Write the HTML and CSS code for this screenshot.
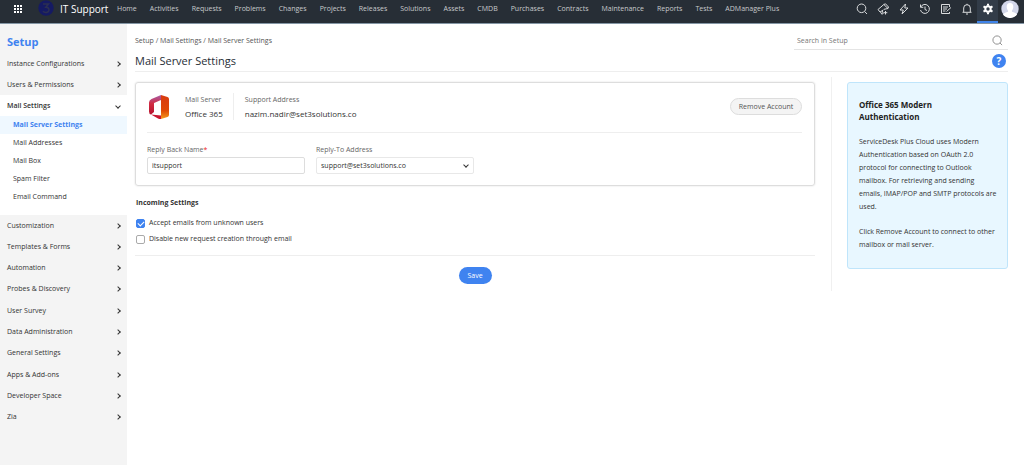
FILE: index.html
```html
<!DOCTYPE html>
<html lang="en">
<head>
<meta charset="utf-8">
<title>Mail Server Settings</title>
<link rel="stylesheet" href="styles.css">
</head>
<body>
<header class="topbar">
  <button class="icon-btn apps" aria-label="Apps">
    <svg width="10" height="10" viewBox="0 0 10 10" fill="#fff"><path d="M1 1h2v2H1zM4 1h2v2H4zM7 1h2v2H7zM1 4h2v2H1zM4 4h2v2H4zM7 4h2v2H7zM1 7h2v2H1zM4 7h2v2H4zM7 7h2v2H7z"/></svg>
  </button>
  <svg class="logo" width="16" height="16" viewBox="0 0 16 16"><circle cx="8" cy="8" r="7.700" fill="#151a63"/><path d="M5 4h5.500L7.800 7.200C10 7.200 11 8.300 11 9.800c0 3-4.500 3.600-6 1.300" fill="none" stroke="#2b2f52" stroke-width="1.500"/></svg>
  <span class="brand">IT Support</span>
  <nav class="nav">
    <a href="#">Home</a><a href="#">Activities</a><a href="#">Requests</a><a href="#">Problems</a><a href="#">Changes</a><a href="#">Projects</a><a href="#">Releases</a><a href="#">Solutions</a><a href="#">Assets</a><a href="#">CMDB</a><a href="#">Purchases</a><a href="#">Contracts</a><a href="#">Maintenance</a><a href="#">Reports</a><a href="#">Tests</a><a href="#">ADManager Plus</a>
  </nav>
  <div class="tools">
    <button class="icon-btn" aria-label="Search"><svg width="12" height="12" viewBox="0 0 12 12"><circle cx="5.500" cy="5.300" r="4.300"/><path d="M8.600 8.500 11 11"/></svg></button>
    <button class="icon-btn" aria-label="Announcements"><svg width="12" height="12" viewBox="0 0 12 12"><path d="M1 6.500 6.800 1.500 11 5.500 7 6.300M6.800 1.500 8.500.8 11.500 4 11 5.500M1 6.500 3 9l3.500-2.200M3.500 9l1.300 2.200 1.500-.8L5.200 8M8.500 8v3.500M6.800 9.700h3.500"/></svg></button>
    <button class="icon-btn" aria-label="Quick actions"><svg width="12" height="12" viewBox="0 0 12 12"><path d="M7.500 1 2 7h3.300L4 11l6-6H6.800z"/></svg></button>
    <button class="icon-btn" aria-label="History"><svg width="12" height="12" viewBox="0 0 12 12"><path d="M1.800 4A4.500 4.500 0 1 1 1.500 7M1.500 1.500V4.300h2.800M6 3.500v3L8 7.500"/></svg></button>
    <button class="icon-btn" aria-label="Notes"><svg width="12" height="12" viewBox="0 0 12 12"><path d="M9.500 4V1.500h-8v9h8V9M3 4h5M3 6h4M3 8h2.500M6.500 8.500 11 4.500"/></svg></button>
    <button class="icon-btn" aria-label="Notifications"><svg width="12" height="12" viewBox="0 0 12 12"><path d="M1.500 9.300h9M2.700 9V5a3.300 3.300 0 0 1 6.600 0v4M6 1.700V.8M5 11h2"/></svg></button>
    <button class="icon-btn active" aria-label="Setup"><svg width="12" height="12" viewBox="0 0 12 12"><g class="gear"><circle cx="6" cy="6" r="2.700"/><path d="M6 .8v2M6 9.200v2M1.500 3.400l1.700 1M8.800 7.600l1.700 1M1.500 8.600l1.700-1M8.800 4.400l1.700-1"/></g></svg></button>
    <button class="icon-btn avatar" aria-label="Profile"><svg width="18" height="18" viewBox="0 0 18 18"><circle cx="9" cy="9" r="8.700" fill="#d3d7ea"/><path d="M9 3c4 0 4 5 2 7.500v1.200c2 .6 4 1.300 5 2.800a8.700 8.700 0 0 1-14 0c1-1.500 3-2.200 5-2.800v-1.200C5 8 5 3 9 3z" fill="#fff"/></svg></button>
  </div>
</header>

<div class="layout">
  <aside class="sidebar">
    <h2 class="side-title">Setup</h2>
    <ul class="menu">
      <li><a href="#">Instance Configurations<i class="chev"></i></a></li>
      <li><a href="#">Users &amp; Permissions<i class="chev"></i></a></li>
    </ul>
    <section class="open">
      <a class="open-head" href="#">Mail Settings<i class="chev down"></i></a>
      <ul class="submenu">
        <li><a class="current" href="#">Mail Server Settings</a></li>
        <li><a href="#">Mail Addresses</a></li>
        <li><a href="#">Mail Box</a></li>
        <li><a href="#">Spam Filter</a></li>
        <li><a href="#">Email Command</a></li>
      </ul>
    </section>
    <ul class="menu long">
      <li><a href="#">Customization<i class="chev"></i></a></li>
      <li><a href="#">Templates &amp; Forms<i class="chev"></i></a></li>
      <li><a href="#">Automation<i class="chev"></i></a></li>
      <li><a href="#">Probes &amp; Discovery<i class="chev"></i></a></li>
      <li><a href="#">User Survey<i class="chev"></i></a></li>
      <li><a href="#">Data Administration<i class="chev"></i></a></li>
      <li><a href="#">General Settings<i class="chev"></i></a></li>
      <li><a href="#">Apps &amp; Add-ons<i class="chev"></i></a></li>
      <li><a href="#">Developer Space<i class="chev"></i></a></li>
      <li><a href="#">Zia<i class="chev"></i></a></li>
    </ul>
  </aside>

  <main class="main">
    <div class="crumb-row">
      <p class="crumbs">Setup / Mail Settings / Mail Server Settings</p>
      <label class="search"><input type="text" placeholder="Search in Setup" aria-label="Search in Setup"><svg width="11" height="11" viewBox="0 0 12 12" fill="none" stroke="#888"><circle cx="5.500" cy="5.500" r="4.500"/><path d="M8.700 8.700 11 11"/></svg></label>
    </div>
    <div class="title-row">
      <h1>Mail Server Settings</h1>
      <button class="help" aria-label="Help">?</button>
    </div>
    <div class="columns">
      <form class="form">
        <div class="card">
          <div class="account">
            <svg class="office" width="22" height="26" viewBox="0 0 22 26">
              <defs>
                <linearGradient id="l" x1="0" y1="0" x2="0" y2="1"><stop offset="0" stop-color="#a75fa8"/><stop offset=".45" stop-color="#d22b42"/><stop offset="1" stop-color="#b5122c"/></linearGradient>
                <linearGradient id="r" x1="0" y1="0" x2="0" y2="1"><stop offset="0" stop-color="#d83b12"/><stop offset=".65" stop-color="#e04a05"/><stop offset="1" stop-color="#f59a1a"/></linearGradient>
              </defs>
              <path d="M13 1 3.500 5Q1 6 1 8.500v9Q1 20 3 20.500l3-2.500V9l7-3z" fill="url(#l)"/>
              <path d="M13 1l6.500 2Q21 3.500 21 5v16q0 1.500-1.500 2L13 25z" fill="url(#r)"/>
              <path d="M3 20.500 13 21.500V25Q11.500 25.300 10 24.500z" fill="#c8152f"/>
            </svg>
            <dl class="fact"><dt>Mail Server</dt><dd>Office 365</dd></dl>
            <dl class="fact address"><dt>Support Address</dt><dd>nazim.nadir@set3solutions.co</dd></dl>
            <button type="button" class="remove">Remove Account</button>
          </div>
          <div class="fields">
            <div class="field"><label for="name">Reply Back Name<span class="req">*</span></label><input id="name" type="text" value="itsupport"></div>
            <div class="field"><label for="reply">Reply-To Address</label><div class="select"><select id="reply"><option>support@set3solutions.co</option></select><i class="chev down"></i></div></div>
          </div>
        </div>
        <h3>Incoming Settings</h3>
        <label class="check"><input type="checkbox" checked>Accept emails from unknown users</label>
        <label class="check"><input type="checkbox">Disable new request creation through email</label>
        <div class="actions"><button type="button" class="save">Save</button></div>
      </form>
      <aside class="help-col">
        <div class="info">
          <h4>Office 365 Modern Authentication</h4>
          <p>ServiceDesk Plus Cloud uses Modern Authentication based on OAuth 2.0 protocol for connecting to Outlook mailbox. For retrieving and sending emails, IMAP/POP and SMTP protocols are used.</p>
          <p>Click Remove Account to connect to other mailbox or mail server.</p>
        </div>
      </aside>
    </div>
  </main>
</div>
</body>
</html>
```
FILE: styles.css
```css
* { box-sizing: border-box; }
body, h1, h2, h3, h4, p, ul, dl, dd { margin: 0; padding: 0; }
body {
  display: flex; flex-direction: column; min-height: 100vh;
  font: 7px/12px "Open Sans", "Noto Sans", sans-serif; color: #333; background: #fff;
}
a { color: inherit; text-decoration: none; }
ul { list-style: none; }
button, input, select { font: inherit; color: inherit; margin: 0; }
button { padding: 0; border: 0; background: none; }

.topbar { display: flex; height: 24px; background: #272e36; border-bottom: 1px solid #8496a5; color: #fff; }
.icon-btn { display: flex; align-items: center; justify-content: center; width: 21px; height: 18px; }
.apps { margin-left: 7px; }
.logo { margin: 0 6px 0 10px; }
.brand { width: 57px; font-size: 10px; line-height: 18px; white-space: nowrap; }
.nav { display: flex; gap: 13px; line-height: 17px; color: #c8cacc; white-space: nowrap; }
.tools { display: flex; margin-left: auto; padding-right: 3px; }
.tools svg { fill: none; stroke: #dadcde; }
.tools .active { height: 23px; padding-bottom: 3px; background: #323c48; border-bottom: 2px solid #3f83e8; }
.gear { stroke: #fff; stroke-width: 2; }
.tools .avatar { width: 23px; }
.avatar svg { stroke: none; }

.layout { display: flex; flex: 1; }
.sidebar { width: 127px; flex: none; background: #f4f4f4; }
.side-title { padding: 8px 7px 2px; font-size: 11px; line-height: 19px; color: #3f83f0; }
.menu a, .open-head { display: flex; align-items: center; justify-content: space-between; height: 21px; padding: 0 7px; }
.long { display: grid; min-height: 213px; }
.chev { width: 4px; height: 4px; border: solid #333; border-width: 1px 1px 0 0; transform: rotate(45deg); }
.chev.down { transform: rotate(135deg); }
.open { background: #fff; padding-bottom: 9px; }
.open-head { font-weight: 600; }
.submenu a { display: block; padding: 3px 13px; }
.submenu .current { background: #eff8ff; color: #3f83f0; font-weight: 700; }

.main { flex: 1; min-width: 0; padding: 8px 16px 0 8px; }
.crumb-row { display: flex; justify-content: space-between; align-items: center; color: #555; }
.search { display: flex; align-items: center; width: 214px; height: 18px; padding: 0 5px 0 3px; border-bottom: 1px solid #e4e4e4; }
.search input { flex: 1; min-width: 0; padding: 0; border: 0; outline: 0; background: none; }
.search input::placeholder { color: #777; }
.title-row { display: flex; justify-content: space-between; align-items: center; height: 22px; padding-right: 2px; border-bottom: 1px solid #eee; }
h1 { font-size: 11px; font-weight: 400; color: #272e36; }
.help { width: 14px; height: 14px; border-radius: 50%; background: #3f83f0; color: #fff; font-size: 10px; font-weight: 700; line-height: 14px; }
.columns { display: flex; gap: 16px; padding-top: 5px; }
.form { flex: 1; padding-top: 5px; }
.card { padding: 10px 12px 11px 11px; border: 1px solid #ddd; border-radius: 3px; box-shadow: 0 0 2px #ddd; }
.account { display: flex; align-items: center; padding-bottom: 12px; border-bottom: 1px solid #eee; }
.office { margin: 0 15px 0 1px; }
.fact dt { line-height: 14px; color: #666; }
.fact dd { font-size: 8px; line-height: 13px; white-space: nowrap; }
.address { margin-left: 10px; padding-left: 11px; border-left: 1px solid #eee; }
.remove { margin-left: auto; width: 72px; height: 17px; border: 1px solid #ddd; border-radius: 9px; background: #f4f4f4; color: #555; }
.fields { display: flex; gap: 11px; padding-top: 11px; }
.field { width: 158px; color: #666; }
.field label { display: block; margin-bottom: 1px; }
.req { color: #e22; }
.field input, .field select { display: block; width: 100%; height: 17px; padding: 0 4px; border: 1px solid #ddd; border-radius: 2px; background: #fff; color: #333; appearance: none; }
.field select { border-color: #e8e8e8; }
.select { display: grid; align-items: center; }
.select > * { grid-area: 1 / 1; }
.select .chev { justify-self: end; margin: 0 6px 2px 0; pointer-events: none; }
h3 { margin: 11px 1px 6px; font-size: 7px; line-height: 12px; }
.check { display: flex; align-items: center; gap: 4px; margin-left: 1px; height: 16px; }
.check input { appearance: none; width: 9px; height: 9px; border: 1px solid #aaa; border-radius: 2px; }
.check input:checked { border-color: #3f83f0; background: #3f83f0; display: grid; place-items: center; }
.check input:checked::before { content: ""; width: 5px; height: 3px; border: solid #fff; border-width: 0 0 1px 1px; transform: rotate(-45deg); }
.actions { margin-top: 8px; padding-top: 11px; border-top: 1px solid #eee; text-align: center; }
.save { width: 33px; height: 17px; border-radius: 9px; background: #3f83f0; color: #fff; }
.help-col { width: 177px; min-height: 213px; padding: 5px 0 22px 15px; border-left: 1px solid #f0f0f0; }
.info { padding: 16px 10px 17px 11px; border: 1px solid #bfe5fb; border-radius: 3px; background: #e8f7ff; }
h4 { padding-right: 20px; font-size: 8px; line-height: 12px; color: #222; }
.info p { margin-top: 12px; line-height: 13px; }
```
